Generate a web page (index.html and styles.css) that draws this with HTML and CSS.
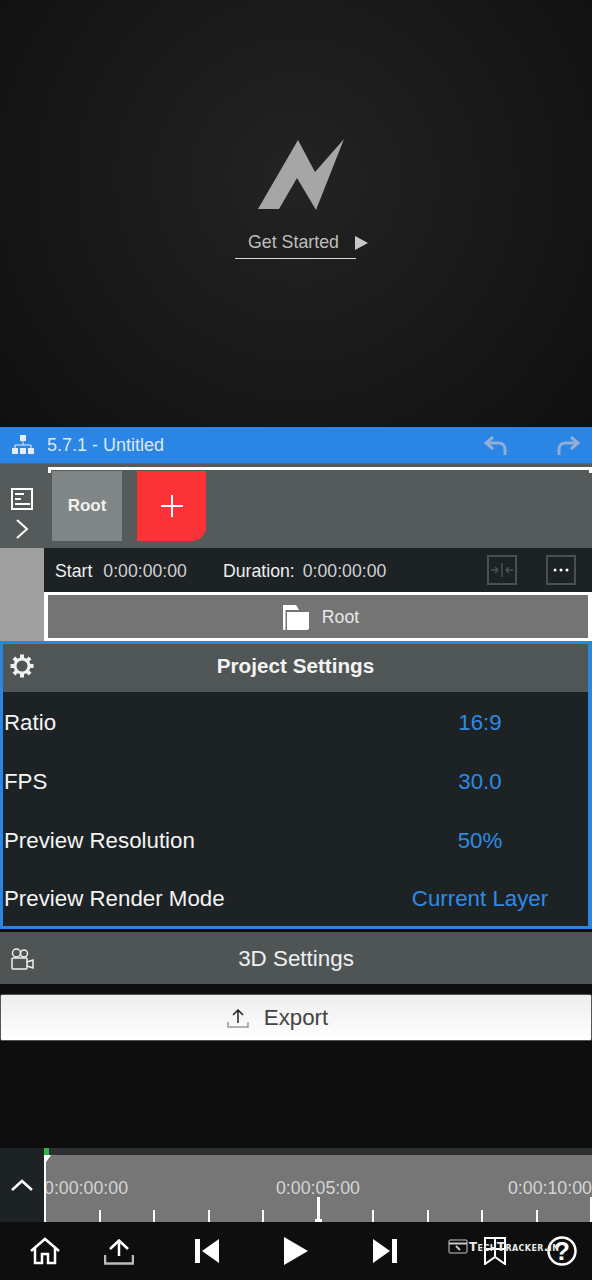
FILE: index.html
```html
<!DOCTYPE html>
<html lang="en">
<head>
    <meta charset="UTF-8">
    <meta name="viewport" content="width=device-width, initial-scale=1.0">
    <title>5.7.1 - Untitled</title>
    <link rel="stylesheet" href="styles.css">
</head>
<body>
    <section class="preview">
        <svg class="logo" width="88" height="74" viewBox="0 0 88 74"><path d="M1 71 L41 2 L58 34 L87 1 L59 72 L40 40 L22 71 Z" fill="#a6a6a6"/></svg>
        <div class="get-started">
            <span>Get Started</span>
            <svg width="13" height="16" viewBox="0 0 13 16"><path d="M0 1 L13 8 L0 15 Z" fill="#c8c8c8"/></svg>
        </div>
    </section>

    <header class="title-bar">
        <svg width="24" height="20" viewBox="0 0 24 20" fill="#e4ecf6"><rect x="9" y="0" width="6" height="6"/><rect x="1" y="13" width="6" height="6"/><rect x="9" y="13" width="6" height="6"/><rect x="17" y="13" width="6" height="6"/><path d="M12 6v4M4 13v-3h16v3" fill="none" stroke="#e4ecf6"/></svg>
        <span class="project-name">5.7.1 - Untitled</span>
        <svg class="undo" width="23" height="19" viewBox="0 0 23 19" fill="none" stroke="#93aed6" stroke-width="3"><path d="M9 1 L2 7 L9 13"/><path d="M2 7 H14 C19 7 21 10 21 13 V19"/></svg>
        <svg class="redo" width="23" height="19" viewBox="0 0 23 19" fill="none" stroke="#93aed6" stroke-width="3"><path d="M14 1 L21 7 L14 13"/><path d="M21 7 H9 C4 7 2 10 2 13 V19"/></svg>
    </header>

    <section class="layers">
        <div class="layers-side">
            <svg width="24" height="24" viewBox="0 0 24 24" fill="none" stroke="#fff" stroke-width="2"><rect x="2" y="2" width="20" height="20"/><path d="M5 7h9M5 12h6M5 17h15"/></svg>
            <svg width="14" height="20" viewBox="0 0 14 20" fill="none" stroke="#fff" stroke-width="2"><path d="M2 1 L12 10 L2 19"/></svg>
        </div>
        <div class="layers-track">
            <div class="layer-root">Root</div>
            <div class="layer-add">
                <svg width="22" height="22" viewBox="0 0 22 22" stroke="#fff" stroke-width="2"><path d="M11 0v22M0 11h22"/></svg>
            </div>
        </div>
    </section>

    <section class="layer-info">
        <div class="info-side"></div>
        <div class="info-main">
            <div class="time-row">
                <span class="time-label">Start</span>
                <span class="time-value start-value">0:00:00:00</span>
                <span class="time-label">Duration:</span>
                <span class="time-value">0:00:00:00</span>
                <span class="box-btn split-btn">
                    <svg width="24" height="14" viewBox="0 0 24 14" fill="none" stroke="#4a5050" stroke-width="1.5"><path d="M12 0v14M1 7h7M5 4l3 3-3 3M23 7h-7M19 4l-3 3 3 3"/></svg>
                </span>
                <span class="box-btn more-btn">
                    <svg width="16" height="4" viewBox="0 0 16 4" fill="#fff"><circle cx="2" cy="2" r="1.5"/><circle cx="8" cy="2" r="1.5"/><circle cx="14" cy="2" r="1.5"/></svg>
                </span>
            </div>
            <div class="root-row">
                <svg width="26" height="25" viewBox="0 0 26 25" fill="#fff"><path d="M0 0h13l3 5H2.500v20H1a1 1 0 0 1-1-1z"/><path d="M4 7h22v16a2 2 0 0 1-2 2H4z"/></svg>
                <span>Root</span>
            </div>
        </div>
    </section>

    <section class="project-settings">
        <div class="settings-head">
            <svg width="26" height="26" viewBox="0 0 26 26" fill="none" stroke="#f0f0f0"><circle cx="13" cy="13" r="7" stroke-width="3"/><path d="M13 1.500v5M13 19.500v5M1.500 13h5M19.500 13h5M4.900 4.900l3.500 3.500M17.600 17.600l3.500 3.500M4.900 21.100l3.500-3.500M17.600 8.400l3.500-3.500" stroke-width="4"/></svg>
            <h2>Project Settings</h2>
        </div>
        <div class="setting-row"><span>Ratio</span><span class="setting-value">16:9</span></div>
        <div class="setting-row"><span>FPS</span><span class="setting-value">30.0</span></div>
        <div class="setting-row"><span>Preview Resolution</span><span class="setting-value">50%</span></div>
        <div class="setting-row"><span>Preview Render Mode</span><span class="setting-value">Current Layer</span></div>
    </section>

    <section class="settings-3d">
        <svg width="23" height="22" viewBox="0 0 23 22" fill="none" stroke="#f0f0f0" stroke-width="1.500"><circle cx="5.500" cy="5" r="4"/><circle cx="13" cy="5.500" r="3.500"/><rect x="1" y="10" width="15" height="11" rx="1"/><path d="M16 14l6-2v8l-6-2"/></svg>
        <span>3D Settings</span>
    </section>

    <button class="export-btn">
        <svg width="22" height="19" viewBox="0 0 22 19" fill="none" stroke-width="1.500"><path d="M11 14V1M6 6l5-5 5 5" stroke="#222"/><path d="M1 13v5h20v-5" stroke="#999"/></svg>
        <span>Export</span>
    </button>

    <section class="timeline">
        <div class="timeline-toggle">
            <svg width="22" height="12" viewBox="0 0 22 12" fill="none" stroke="#fff" stroke-width="2.500"><path d="M1 11 L11 2 L21 11"/></svg>
        </div>
        <div class="ruler">
            <div class="ruler-strip"></div>
            <div class="ruler-labels">
                <span>0:00:00:00</span>
                <span>0:00:05:00</span>
                <span>0:00:10:00</span>
            </div>
            <div class="ticks">
                <i class="tick major"></i><i class="tick"></i><i class="tick"></i><i class="tick"></i><i class="tick"></i>
                <i class="tick major mid"></i><i class="tick"></i><i class="tick"></i><i class="tick"></i><i class="tick"></i>
                <i class="tick major"></i>
            </div>
            <div class="playhead-line"></div>
            <div class="playhead-top"></div>
            <svg class="playhead-arrow" width="7" height="10" viewBox="0 0 7 10"><path d="M0 0h7L0 10z" fill="#fff"/></svg>
        </div>
    </section>

    <nav class="bottom-bar">
        <svg class="nav-home" width="30" height="28" viewBox="0 0 30 28" fill="none" stroke="#fff" stroke-width="2.500"><path d="M1 14 L15 2 L29 14"/><path d="M5 11V26H12V17H18V26H25V11"/></svg>
        <svg class="nav-share" width="30" height="26" viewBox="0 0 30 26" fill="none" stroke-width="2.500"><path d="M15 17V2M6 10l9-8.500 9 8.500" stroke="#fff"/><path d="M1 16v8.500h28v-8.500" stroke="#bbb"/></svg>
        <svg class="nav-prev" width="26" height="26" viewBox="0 0 26 26" fill="#fff"><rect x="1" y="1" width="5" height="24"/><path d="M25 1V25L8 13Z"/></svg>
        <svg class="nav-play" width="26" height="30" viewBox="0 0 26 30" fill="#fff"><path d="M1 1V29L25 15Z"/></svg>
        <svg class="nav-next" width="26" height="26" viewBox="0 0 26 26" fill="#fff"><rect x="20" y="1" width="5" height="24"/><path d="M1 1V25L18 13Z"/></svg>
        <svg class="nav-bookmark" width="22" height="28" viewBox="0 0 22 28" fill="none" stroke="#fff" stroke-width="2"><path d="M1 1H21V27L11 20L1 27Z"/><path d="M11 1V20M1 12H21"/></svg>
        <svg class="nav-help" width="30" height="30" viewBox="0 0 30 30" fill="none" stroke="#fff" stroke-width="2.500"><circle cx="15" cy="15" r="13.500"/></svg>
        <span class="help-mark">?</span>
        <div class="watermark">
            <svg width="20" height="15" viewBox="0 0 20 15" fill="none" stroke="#c8c8c8"><rect x="1" y="1" width="18" height="13" rx="1"/><path d="M1 4.500h18" stroke-width="2"/><path d="M8 7l4 4" stroke-width="2"/></svg>
            <span>TechTracker.in</span>
        </div>
    </nav>
</body>
</html>
```

FILE: styles.css
```css
* {
    margin: 0;
    padding: 0;
    box-sizing: border-box;
}
html, body {
    width: 592px;
    height: 1280px;
    overflow: hidden;
}
body {
    font-family: 'Liberation Sans', Arial, sans-serif;
    color: #fff;
    background-color: #0e0e0e;
}
svg {
    display: block;
    flex: none;
}

/* preview */
.preview {
    height: 427px;
    display: flex;
    flex-direction: column;
    align-items: center;
    padding-top: 138px;
    background: radial-gradient(circle at 50% 42%, #232323 0, #1c1c1c 35%, #101010 100%);
}
.logo {
    margin-left: 10px;
}
.get-started {
    width: 121px;
    height: 36px;
    margin-top: 11px;
    margin-right: 1px;
    display: flex;
    align-items: center;
    gap: 16px;
    padding: 4px 0 0 13px;
    font-size: 17.800px;
    color: #bdbdbd;
    border-bottom: 1px solid #d8d8d8;
    white-space: nowrap;
}

/* title bar */
.title-bar {
    height: 37px;
    display: flex;
    align-items: center;
    padding-left: 11px;
    background-color: #2b85e4;
    border-bottom: 1px solid #3a6ea8;
}
.project-name {
    margin-left: 12px;
    font-size: 18px;
    color: #dbe8f7;
    flex: 1;
}
.undo {
    margin-right: 50px;
}
.redo {
    margin-right: 12px;
}

/* layers */
.layers {
    height: 84px;
    display: flex;
    background-color: #555a5a;
}
.layers-side {
    width: 44px;
    display: flex;
    flex-direction: column;
    align-items: center;
    padding: 23px 1px 0 0;
    gap: 8px;
}
.layers-track {
    flex: 1;
    margin-top: 3px;
    margin-left: 4px;
    display: flex;
    gap: 15px;
    padding: 1px 0 0 4px;
    border-top: 3px solid #fff;
    position: relative;
}
.layers-track::before, .layers-track::after {
    content: "";
    position: absolute;
    top: 0;
    width: 3px;
    height: 3px;
    background-color: #fff;
}
.layers-track::before {
    left: 0;
}
.layers-track::after {
    right: 0;
}
.layer-root {
    width: 70px;
    height: 70px;
    display: flex;
    align-items: center;
    justify-content: center;
    font-size: 17px;
    font-weight: 700;
    color: #f0f0f0;
    background-color: #808585;
}
.layer-add {
    width: 69px;
    height: 70px;
    display: flex;
    align-items: center;
    justify-content: center;
    background-color: #fb3338;
    border-bottom-right-radius: 14px;
}

/* layer info */
.layer-info {
    height: 93px;
    display: flex;
    background-color: #1d2325;
}
.info-side {
    width: 44px;
    background-color: #a0a0a0;
}
.info-main {
    flex: 1;
    display: flex;
    flex-direction: column;
    min-width: 0;
}
.time-row {
    height: 44px;
    display: flex;
    align-items: center;
    padding-left: 11px;
    font-size: 17.700px;
    white-space: nowrap;
}
.time-label {
    padding-top: 2px;
    color: #eeeeee;
}
.time-value {
    margin-left: 8px;
    padding-top: 2px;
    color: #d0d0d0;
}
.start-value {
    margin-left: 11px;
    margin-right: 36px;
}
.box-btn {
    width: 30px;
    height: 30px;
    display: flex;
    align-items: center;
    justify-content: center;
    border: 2px solid #4a5050;
}
.split-btn {
    margin-left: 101px;
}
.more-btn {
    margin-left: 29px;
}
.root-row {
    height: 49px;
    display: flex;
    align-items: center;
    justify-content: center;
    gap: 13px;
    padding: 1px 0 0 6px;
    font-size: 17.700px;
    color: #e8e8e8;
    background-color: #747474;
    border: 3px solid #fff;
    border-width: 3px 4px;
}

/* project settings */
.project-settings {
    height: 288px;
    background-color: #1d2325;
    border: 3px solid #2b85e4;
    border-right-width: 4px;
}
.settings-head {
    height: 48px;
    display: flex;
    align-items: center;
    padding: 0 0 4px 6px;
    position: relative;
    background-color: #505555;
}
.settings-head h2 {
    position: absolute;
    left: 0;
    right: 0;
    text-align: center;
    font-size: 20.700px;
    font-weight: 700;
    color: #f4f4f4;
}
.setting-row {
    height: 59px;
    display: flex;
    align-items: center;
    padding: 2px 0 0 1px;
    font-size: 22.300px;
    color: #f4f4f4;
    position: relative;
}
.setting-row:last-child {
    height: 57px;
    padding-top: 3px;
}
.setting-value {
    position: absolute;
    left: 477px;
    transform: translateX(-50%);
    white-space: nowrap;
    color: #2f8ae6;
}

/* 3d settings */
.settings-3d {
    height: 52px;
    margin-top: 3px;
    padding-top: 1px;
    display: flex;
    align-items: center;
    justify-content: center;
    position: relative;
    font-size: 22.400px;
    color: #f0f0f0;
    background-color: #4f5555;
}
.settings-3d svg {
    position: absolute;
    left: 11px;
    top: 16px;
}

/* export */
.export-btn {
    display: flex;
    align-items: center;
    justify-content: center;
    gap: 15px;
    width: 592px;
    height: 47px;
    margin-top: 10px;
    padding: 1px 37px 0 0;
    border: 1px solid #555;
    border-radius: 2px;
    font-family: inherit;
    font-size: 22.300px;
    color: #444;
    background: linear-gradient(#eeeeee, #ffffff);
}

/* timeline */
.timeline {
    height: 74px;
    margin-top: 107px;
    display: flex;
    background-color: #1d2325;
}
.timeline-toggle {
    width: 44px;
    flex: none;
    display: flex;
    justify-content: center;
    padding-top: 31px;
}
.ruler {
    flex: 1;
    min-width: 0;
    position: relative;
    display: flex;
    flex-direction: column;
    background-color: #767676;
}
.ruler-strip {
    height: 7px;
    flex: none;
    background-color: #2b2f2f;
}
.ruler-labels {
    display: flex;
    justify-content: space-between;
    margin-top: 24px;
    font-size: 17.800px;
    line-height: 18px;
    color: #d4d4d4;
}
.ticks {
    margin-top: auto;
    height: 25px;
    flex: none;
    display: flex;
    justify-content: space-between;
    align-items: flex-end;
}
.tick {
    width: 2px;
    height: 12px;
    background-color: #fff;
    position: relative;
}
.tick.major {
    height: 25px;
}
.tick.mid {
    width: 3px;
}
.tick.mid::after {
    content: "";
    position: absolute;
    left: -2px;
    bottom: 0;
    width: 7px;
    height: 3px;
    background-color: #fff;
}
.playhead-line {
    position: absolute;
    left: 0;
    top: 0;
    bottom: 0;
    width: 2px;
    background-color: #fff;
}
.playhead-top {
    position: absolute;
    left: 0;
    top: 0;
    width: 5px;
    height: 7px;
    background-color: #2fb84a;
}
.playhead-arrow {
    position: absolute;
    left: 0;
    top: 7px;
}

/* bottom bar */
.bottom-bar {
    height: 58px;
    position: relative;
    background-color: #0e0e0e;
}
.bottom-bar svg {
    position: absolute;
}
.nav-home { left: 30px; top: 15px; }
.nav-share { left: 104px; top: 17px; }
.nav-prev { left: 194px; top: 16px; }
.nav-play { left: 283px; top: 14px; }
.nav-next { left: 372px; top: 16px; }
.nav-bookmark { left: 484px; top: 15px; }
.nav-help { left: 547px; top: 14px; }
.help-mark {
    position: absolute;
    left: 547px;
    top: 14px;
    width: 30px;
    line-height: 30px;
    text-align: center;
    font-size: 26px;
    font-weight: 700;
}
.watermark {
    position: absolute;
    left: 448px;
    top: 17px;
    display: flex;
    align-items: center;
    gap: 1px;
    font-family: 'DejaVu Sans', sans-serif;
    font-size: 12px;
    font-weight: 700;
    font-variant: small-caps;
    letter-spacing: 0.400px;
    color: #e8e8e8;
    white-space: nowrap;
}
.watermark svg {
    position: static;
}
```
